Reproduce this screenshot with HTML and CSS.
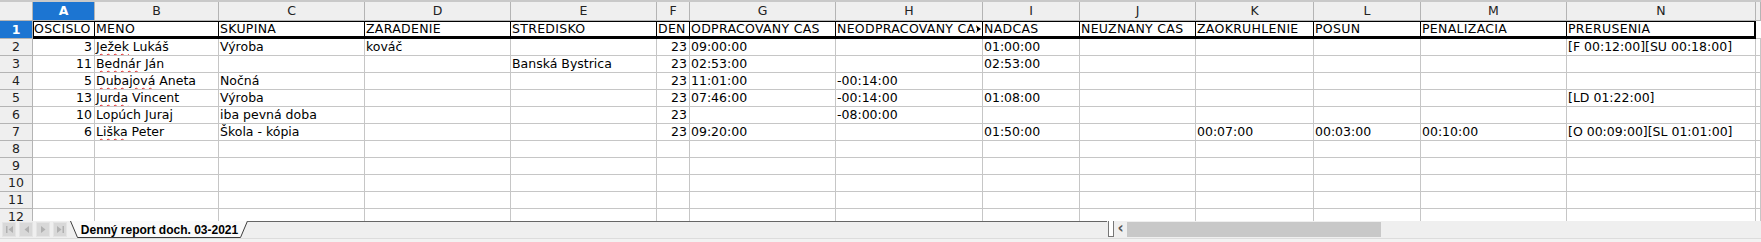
FILE: index.html
```html
<!DOCTYPE html>
<html lang="sk">
<head>
    <meta charset="UTF-8">
    <title>Denný report doch. 03-2021</title>
    <link rel="stylesheet" href="styles.css">
</head>
<body>
    <div class="sheet">
        <div class="row colhdr">
            <span></span><span class="sel">A</span><span>B</span><span>C</span><span>D</span><span>E</span><span>F</span><span>G</span><span>H</span><span>I</span><span>J</span><span>K</span><span>L</span><span>M</span><span>N</span><span></span>
        </div>
        <div class="row head">
            <span class="rh sel">1</span><span class="first">OSCISLO</span><span>MENO</span><span>SKUPINA</span><span>ZARADENIE</span><span>STREDISKO</span><span>DEN</span><span>ODPRACOVANY CAS</span><span class="cut"><em>NEODPRACOVANY CAS</em><b class="more"></b></span><span>NADCAS</span><span>NEUZNANY CAS</span><span>ZAOKRUHLENIE</span><span>POSUN</span><span>PENALIZACIA</span><span class="last">PRERUSENIA</span><span class="out"></span>
        </div>
        <div class="row">
            <span class="rh">2</span><span class="num">3</span><span><u>Ježek</u> Lukáš</span><span>Výroba</span><span>kováč</span><span></span><span class="num">23</span><span>09:00:00</span><span></span><span>01:00:00</span><span></span><span></span><span></span><span></span><span>[F 00:12:00][SU 00:18:00]</span><span></span>
        </div>
        <div class="row">
            <span class="rh">3</span><span class="num">11</span><span><u>Bednár</u> Ján</span><span></span><span></span><span>Banská Bystrica</span><span class="num">23</span><span>02:53:00</span><span></span><span>02:53:00</span><span></span><span></span><span></span><span></span><span></span><span></span>
        </div>
        <div class="row">
            <span class="rh">4</span><span class="num">5</span><span><u>Dubajová</u> Aneta</span><span>Nočná</span><span></span><span></span><span class="num">23</span><span>11:01:00</span><span>-00:14:00</span><span></span><span></span><span></span><span></span><span></span><span></span><span></span>
        </div>
        <div class="row">
            <span class="rh">5</span><span class="num">13</span><span><u>Jurda</u> Vincent</span><span>Výroba</span><span></span><span></span><span class="num">23</span><span>07:46:00</span><span>-00:14:00</span><span>01:08:00</span><span></span><span></span><span></span><span></span><span>[LD 01:22:00]</span><span></span>
        </div>
        <div class="row">
            <span class="rh">6</span><span class="num">10</span><span>Lopúch Juraj</span><span>iba pevná doba</span><span></span><span></span><span class="num">23</span><span></span><span>-08:00:00</span><span></span><span></span><span></span><span></span><span></span><span></span><span></span>
        </div>
        <div class="row">
            <span class="rh">7</span><span class="num">6</span><span><u>Liška</u> Peter</span><span>Škola - kópia</span><span></span><span></span><span class="num">23</span><span>09:20:00</span><span></span><span>01:50:00</span><span></span><span>00:07:00</span><span>00:03:00</span><span>00:10:00</span><span>[O 00:09:00][SL 01:01:00]</span><span></span>
        </div>
        <div class="row">
            <span class="rh">8</span><span></span><span></span><span></span><span></span><span></span><span></span><span></span><span></span><span></span><span></span><span></span><span></span><span></span><span></span><span></span>
        </div>
        <div class="row">
            <span class="rh">9</span><span></span><span></span><span></span><span></span><span></span><span></span><span></span><span></span><span></span><span></span><span></span><span></span><span></span><span></span><span></span>
        </div>
        <div class="row">
            <span class="rh">10</span><span></span><span></span><span></span><span></span><span></span><span></span><span></span><span></span><span></span><span></span><span></span><span></span><span></span><span></span><span></span>
        </div>
        <div class="row">
            <span class="rh">11</span><span></span><span></span><span></span><span></span><span></span><span></span><span></span><span></span><span></span><span></span><span></span><span></span><span></span><span></span><span></span>
        </div>
        <div class="row">
            <span class="rh">12</span><span></span><span></span><span></span><span></span><span></span><span></span><span></span><span></span><span></span><span></span><span></span><span></span><span></span><span></span><span></span>
        </div>
    </div>

    <div class="tabbar">
        <div class="nav">
            <button><svg width="9" height="9" viewBox="0 0 9 9"><rect x="1" y="1" width="1.5" height="7"/><path d="M8 1 L3.5 4.5 L8 8 Z"/></svg></button>
            <button><svg width="9" height="9" viewBox="0 0 9 9"><path d="M7 1 L2.5 4.5 L7 8 Z"/></svg></button>
            <button><svg width="9" height="9" viewBox="0 0 9 9"><path d="M2 1 L6.5 4.5 L2 8 Z"/></svg></button>
            <button><svg width="9" height="9" viewBox="0 0 9 9"><path d="M1 1 L5.5 4.5 L1 8 Z"/><rect x="6.5" y="1" width="1.5" height="7"/></svg></button>
        </div>
        <div class="tab">
            <svg class="tab-shape" width="178" height="17" viewBox="0 0 178 17"><path d="M0.5 0 L7.5 16.5 L170.5 16.5 L177.5 0" fill="#fafafa" stroke="#3c3c3c"/></svg>
            <span>Denný report doch. 03-2021</span>
        </div>
        <div class="tab-rest"></div>
        <div class="split"></div>
        <div class="arrow">&lsaquo;</div>
        <div class="thumb"></div>
        <div class="track"></div>
    </div>
    <div class="status"></div>
</body>
</html>
```

FILE: styles.css
```css
body {
    margin: 0;
    width: 1761px;
    height: 242px;
    overflow: hidden;
    background-color: #fff;
    font-family: "DejaVu Sans", sans-serif;
    font-size: 12.5px;
    color: #000;
}
.sheet {
    height: 221px;
    overflow: hidden;
}
.row {
    display: grid;
    grid-template-columns: 33px 62px 124px 146px 146px 146px 33px 146px 147px 97px 116px 118px 107px 146px 189px 1fr;
    height: 17px;
}
.row > span {
    box-sizing: border-box;
    border-right: 1px solid #c6c6c6;
    border-bottom: 1px solid #c6c6c6;
    padding: 0 1px;
    line-height: 16px;
    white-space: nowrap;
    overflow: hidden;
}
.row > span.num {
    text-align: right;
    padding-right: 2px;
}
.row > span.rh {
    background-color: #efefef;
    border-right-color: #b4b4b4;
    border-bottom-color: #b4b4b4;
    text-align: center;
    color: #222;
    letter-spacing: 0;
}
.row u {
    text-decoration: underline wavy #e02020;
    text-decoration-thickness: 1px;
    text-underline-offset: 2px;
}

/* column letters */
.colhdr {
    height: 21px;
    border-top: 2px solid #c9c9c9;
    box-sizing: border-box;
}
.colhdr > span {
    background-color: #efefef;
    border-right-color: #b4b4b4;
    border-bottom-color: #b4b4b4;
    text-align: center;
    line-height: 18px;
    color: #222;
}
.row > span.sel {
    background-color: #1c75d2;
    color: #fff;
    font-weight: bold;
}

/* header row with thick border */
.head {
    height: 18px;
    letter-spacing: 0.3px;
}
.head > span {
    border-top: 1px solid #000;
    border-right: 1px solid #000;
    border-bottom: 3px solid #000;
    line-height: 14px;
}
.head > span.rh {
    border-top: none;
    border-bottom: 1px solid #b4b4b4;
    border-right-color: #b4b4b4;
    line-height: 17px;
}
.head > span.first {
    border-left: 1px solid #000;
    padding-left: 0;
}
.head > span.last {
    border-right-width: 2px;
}
.head > span.out {
    border-top: none;
    border-right: none;
    border-bottom: 1px solid #c6c6c6;
}
.head > span.cut {
    display: flex;
    align-items: center;
    padding-right: 1px;
}
.cut em {
    font-style: normal;
    overflow: hidden;
    flex: 1;
}
.cut .more {
    width: 0;
    height: 0;
    border-top: 3px solid transparent;
    border-bottom: 3px solid transparent;
    border-left: 4px solid #000;
}

/* sheet tabs and scrollbar */
.tabbar {
    display: flex;
    height: 17px;
    background-color: #efefef;
}
.nav {
    display: flex;
    gap: 3px;
    width: 70px;
    padding: 1px 0 0 2px;
    box-sizing: border-box;
}
.nav button {
    width: 14px;
    height: 15px;
    padding: 0;
    border: 1px solid #e4e4e4;
    background-color: #d8d8d8;
    display: flex;
    align-items: center;
    justify-content: center;
}
.nav svg {
    fill: #b0b0b0;
}
.tab {
    position: relative;
    width: 178px;
    height: 17px;
    display: flex;
    align-items: center;
    justify-content: center;
}
.tab-shape {
    position: absolute;
    left: 0;
    top: 0;
}
.tab span {
    position: relative;
    font-family: "Liberation Sans", Arial, sans-serif;
    font-size: 12px;
    font-weight: bold;
    white-space: nowrap;
    padding-left: 1px;
}
.tab-rest {
    width: 859px;
    border-top: 1px solid #666;
}
.split {
    width: 4px;
    height: 15px;
    background-color: #fff;
    border: 1px solid #777;
    border-top: none;
    margin-left: 1px;
}
.arrow {
    width: 13px;
    text-align: center;
    font-size: 15px;
    line-height: 15px;
    font-weight: bold;
    color: #555;
}
.thumb {
    width: 254px;
    height: 15px;
    margin-top: 1px;
    background-color: #c8c8c8;
}
.track {
    flex: 1;
}
.status {
    height: 4px;
    border-top: 1px solid #dcdcdc;
    background-color: #f2f2f2;
}
```
